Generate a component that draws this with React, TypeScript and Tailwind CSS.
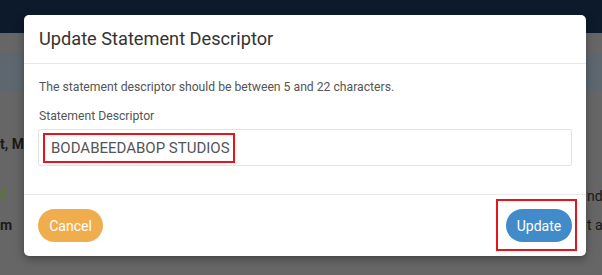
import React from "react";

export default function App() {
  return (
    <div className="relative w-[602px] h-[275px] overflow-hidden bg-[#666666] font-['Roboto',sans-serif]">
      {/* background page (dimmed) */}
      <div className="flex flex-col">
        <div className="h-[33px] bg-[#0c1a2b]" />
        <div className="h-[20px]" />
        <div className="h-[39px] bg-[#5e676f]" />
        <div className="flex justify-between pt-[43px]">
          <div className="flex flex-col w-[24px] overflow-hidden">
            <div className="text-[14px] leading-[18px] font-bold text-[#1a1a1a] whitespace-nowrap">t, Mu</div>
            <div className="mt-[33px] h-[14px] w-[8px]">
              <svg width="8" height="14" viewBox="0 0 8 14">
                <path d="M1 2 L5 2 L5 6 L1 6 M3 6 L3 12 M0 12 L6 12" stroke="#5a7a2a" strokeWidth="1.5" fill="none" />
              </svg>
            </div>
            <div className="mt-[16px] text-[14px] leading-[18px] font-bold text-[#1a1a1a]">m</div>
          </div>
          <div className="flex flex-col items-start w-[15px] overflow-hidden pt-[52px]">
            <div className="text-[14px] leading-[18px] text-[#1a1a1a] whitespace-nowrap">nd</div>
            <div className="mt-[11px] text-[14px] leading-[18px] text-[#1a1a1a] whitespace-nowrap">t as</div>
          </div>
        </div>
      </div>

      {/* modal */}
      <div className="absolute left-[24px] top-[15px] w-[562px] h-[241px] bg-white rounded-[5px] shadow-[0_3px_9px_rgba(0,0,0,0.35)] flex flex-col">
        <div className="h-[49px] border-b border-[#e9e9e9] flex items-center px-[15px]">
          <h4 className="text-[18.2px] leading-[24px] text-[#333333]">Update Statement Descriptor</h4>
        </div>
        <div className="px-[14px] pt-[14px] pb-[28px] flex flex-col">
          <p className="pl-[1px] text-[12.2px] leading-[18px] text-[#555555]">
            The statement descriptor should be between 5 and 22 characters.
          </p>
          <label className="pl-[1px] mt-[11px] text-[12.2px] leading-[18px] text-[#555555]">Statement Descriptor</label>
          <div className="mt-[4px] h-[37px] border border-[#e3e3e3] rounded-[2px] flex items-center pl-[4px]">
            <div className="h-[30px] w-[192px] border-2 border-[#e8141b] flex items-center pl-[6px]">
              <span className="text-[15px] leading-[20px] text-[#555555] whitespace-nowrap">BODABEEDABOP STUDIOS</span>
            </div>
          </div>
        </div>
        <div className="border-t border-[#e9e9e9] flex-1 flex items-start justify-between pl-[14px] pr-[14px] pt-[14px]">
          <button className="h-[33px] w-[65px] rounded-full bg-[#f0ad4e] text-white text-[14px] leading-[20px]">Cancel</button>
          <div className="relative">
            <div className="absolute left-[-10px] top-[-10px] w-[81px] h-[52px] border-2 border-[#e8141b]" />
            <button className="h-[33px] w-[66px] rounded-full bg-[#428bca] text-white text-[14px] leading-[20px]">Update</button>
          </div>
        </div>
      </div>
    </div>
  );
}
